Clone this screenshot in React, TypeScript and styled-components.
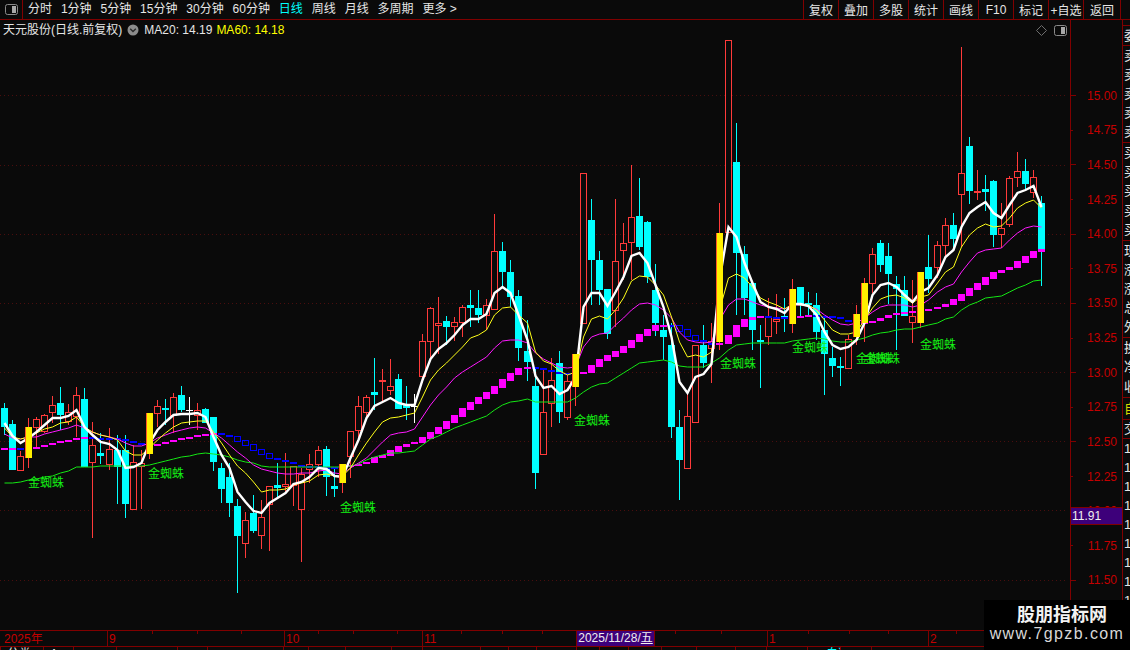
import React from "react";
import styled, { createGlobalStyle } from "styled-components";

const RED_LINE = "#800000";
const BG = "#0a0a0a";
const UI_FONT = `"Liberation Sans", "Noto Sans CJK SC", sans-serif`;

const Global = createGlobalStyle`
  html, body { margin: 0; padding: 0; background: ${BG}; }
  body { font-family: ${UI_FONT}; }
`;

const Screen = styled.div`
  position: relative;
  width: 1130px;
  height: 650px;
  overflow: hidden;
  background: ${BG};
  display: flex;
  flex-direction: column;
  color: #e6e6e6;
  font-size: 12px;
`;

const Toolbar = styled.div`
  height: 19px;
  flex: none;
  display: flex;
  align-items: stretch;
  border-bottom: 1px solid ${RED_LINE};
`;
const ToggleCell = styled.div`
  width: 23px;
  flex: none;
  border-right: 1px solid ${RED_LINE};
  display: flex;
  align-items: center;
  justify-content: center;
  box-sizing: border-box;
`;
const PeriodTabs = styled.div`
  display: flex;
  align-items: center;
  gap: 8.9px;
  padding-left: 5px;
  flex: 1;
`;
const PeriodTab = styled.span<{ $active?: boolean }>`
  color: ${(p) => (p.$active ? "#00ffff" : "#e6e6e6")};
  line-height: 19px;
  white-space: nowrap;
`;
const ActionButtons = styled.div`
  display: flex;
  margin-right: 9px;
  border-right: 1px solid ${RED_LINE};
`;
const ActionButton = styled.div<{ $wide?: boolean }>`
  width: ${(p) => (p.$wide ? 37 : 35)}px;
  box-sizing: border-box;
  border-left: 1px solid ${RED_LINE};
  display: flex;
  align-items: center;
  justify-content: center;
  white-space: nowrap;
  overflow: hidden;
`;

const Main = styled.div`
  height: 610px;
  flex: none;
  display: flex;
`;
const ChartColumn = styled.div`
  width: 1070px;
  flex: none;
  display: flex;
  flex-direction: column;
`;
const InfoRow = styled.div`
  height: 20px;
  flex: none;
  display: flex;
  align-items: center;
  padding: 0 3px;
  line-height: 20px;
`;
const StockName = styled.span`
  color: #e6e6e6;
  margin-right: 5px;
`;
const MaValue = styled.span<{ $color: string; $gap: number }>`
  color: ${(p) => p.$color};
  margin-left: ${(p) => p.$gap}px;
`;
const InfoIcons = styled.div`
  margin-left: auto;
  display: flex;
  align-items: center;
  gap: 7px;
`;
const ChartSvg = styled.svg`
  display: block;
  flex: none;
`;
const SignalLabel = styled.text`
  fill: #14f014;
  font-size: 12px;
  font-family: "Noto Sans CJK SC", sans-serif;
`;

const PriceAxis = styled.div`
  position: relative;
  width: 52px;
  flex: none;
  box-sizing: border-box;
  border-left: 1px solid ${RED_LINE};
  padding-top: 58.4px;
  display: flex;
  flex-direction: column;
`;
const PriceRow = styled.div<{ $major: boolean }>`
  height: 34.64px;
  flex: none;
  display: flex;
  align-items: center;
  &::before {
    content: "";
    width: ${(p) => (p.$major ? 5 : 2)}px;
    height: 1px;
    background: ${RED_LINE};
  }
`;
const PriceLabel = styled.span`
  margin-left: auto;
  margin-right: 5px;
  color: #c40000;
  font-size: 12px;
  line-height: 14px;
`;
const CurrentPrice = styled.div`
  position: absolute;
  left: 0;
  right: 0;
  top: 487px;
  height: 16px;
  box-sizing: content-box;
  background: #3d007a;
  border-top: 1px solid ${RED_LINE};
  border-bottom: 1px solid ${RED_LINE};
  color: #f0f0f0;
  line-height: 16px;
  padding-left: 1px;
`;

const SideStrip = styled.div`
  width: 8px;
  flex: none;
  box-sizing: border-box;
  border-left: 1px solid ${RED_LINE};
  padding-top: 5px;
  overflow: hidden;
  display: flex;
  flex-direction: column;
`;
const StripSection = styled.div<{ $h: number }>`
  height: ${(p) => p.$h}px;
  flex: none;
  border-top: 1px solid ${RED_LINE};
  box-sizing: border-box;
  display: flex;
  flex-direction: column;
  justify-content: space-around;
`;
const StripChar = styled.div<{ $yellow?: boolean }>`
  width: 30px;
  font-size: 13px;
  line-height: 14px;
  padding-left: 1px;
  white-space: nowrap;
  color: ${(p) => (p.$yellow ? "#d8d800" : "#e6e6e6")};
`;

const TimeAxis = styled.div`
  height: 17px;
  flex: none;
  box-sizing: border-box;
  border-top: 1px solid ${RED_LINE};
  border-bottom: 1px solid ${RED_LINE};
  display: flex;
`;
const TimeCell = styled.div<{ $w: number; $kind: "major" | "minor" | "none" }>`
  position: relative;
  width: ${(p) => p.$w}px;
  flex: none;
  box-sizing: border-box;
  border-left: ${(p) => (p.$kind === "major" ? `1px solid ${RED_LINE}` : "none")};
  padding-left: ${(p) => (p.$kind === "major" ? 1 : 4)}px;
  color: #c40000;
  line-height: 16px;
  white-space: nowrap;
  &::before {
    content: "";
    display: ${(p) => (p.$kind === "minor" ? "block" : "none")};
    position: absolute;
    left: 0;
    top: 0;
    width: 1px;
    height: 3px;
    background: ${RED_LINE};
  }
`;
const DateBadge = styled.div`
  width: 79px;
  flex: none;
  box-sizing: border-box;
  background: #3d007a;
  border-left: 1px solid ${RED_LINE};
  border-right: 1px solid ${RED_LINE};
  color: #f0f0f0;
  line-height: 15px;
  text-align: center;
  white-space: nowrap;
  overflow: hidden;
`;
const Underlined = styled.span`
  text-decoration: underline;
`;

const BottomTabs = styled.div`
  height: 3px;
  flex: none;
  display: flex;
  overflow: hidden;
`;
const BottomTab = styled.div<{ $w: number; $cyan?: boolean }>`
  width: ${(p) => p.$w}px;
  flex: none;
  box-sizing: border-box;
  border-left: 1px solid ${RED_LINE};
  padding-left: ${(p) => (p.$cyan ? 18 : 6)}px;
  line-height: 14px;
  white-space: nowrap;
  overflow: hidden;
  color: ${(p) => (p.$cyan ? "#00ffff" : "#e6e6e6")};
`;

const Watermark = styled.div`
  position: absolute;
  left: 984px;
  top: 600px;
  width: 146px;
  height: 50px;
  background: #000;
  display: flex;
  flex-direction: column;
  align-items: center;
  color: #f2f2f2;
`;
const WatermarkTitle = styled.div`
  margin-top: 2px;
  margin-left: 10px;
  font-family: "Noto Sans CJK SC", sans-serif;
  font-weight: 700;
  font-size: 18px;
  line-height: 22px;
`;
const WatermarkUrl = styled.div`
  font-size: 16px;
  line-height: 19px;
  letter-spacing: 1.4px;
  color: #d8d8d8;
`;

const ToggleIcon = () => (
  <svg width="13" height="11" viewBox="0 0 13 11">
    <rect x="0.5" y="0.5" width="12" height="10" rx="2" fill="none" stroke="#8a8a8a" />
    <rect x="7" y="2" width="4" height="7" fill="#a8a8a8" />
  </svg>
);
const DiamondIcon = () => (
  <svg width="11" height="11" viewBox="0 0 11 11">
    <path d="M5.5 0.5 L10.5 5.5 L5.5 10.5 L0.5 5.5 Z" fill="none" stroke="#6e6e6e" />
  </svg>
);
const ChevronBadge = () => (
  <svg width="12" height="12" viewBox="0 0 12 12">
    <circle cx="6" cy="6" r="5.5" fill="#8c8c8c" />
    <path d="M3.2 4.8 L6 7.6 L8.8 4.8" fill="none" stroke="#2a2a2a" strokeWidth="1.4" />
  </svg>
);

// type, bodyTop, bodyBottom, high, low, white, yellow, magenta, green, step
type Row = [string, number, number, number, number, number, number, number, number, number];
const DATA: Row[] = [
  ["c",408,427,403,435,423,428,434,483,448],
  ["c",424,470,420,470,436,437,438,483,448],
  ["r",456,471,451,471,443,439,439,482,448.5],
  ["g",427,458,418,468,438,437,437,480,448],
  ["r",419,428,417,447,432,433,437,479,447],
  ["r",415,432,414,433,425,429,434,477,445],
  ["r",405,413,396,423,418,427,432,476,443],
  ["c",403,415,387,430,418,423,430,473,441],
  ["r",412,422,404,425,416,422,428,471,440],
  ["r",395,417,387,437,410,417,425,467,438],
  ["c",399,467,388,467,427,427,428,467,437],
  ["r",445,463,422,538,435,432,432,467,437.5],
  ["c",453,456,433,464,442,435,435,466,437.5],
  ["r",449,465,428,470,444,437,437,466,438],
  ["c",450,467,435,504,450,440,439,466,439],
  ["c",450,504,435,518,468,451,443,466,441],
  ["r",462,510,445,510,467,455,446,466,443],
  ["r",463,467,450,509,463,455,446,466,445],
  ["g",413,454,413,459,443,448,443,465,445],
  ["r",406,414,400,427,430,440,438,463,444],
  ["c",408,409,399,425,422,433,435,461,442],
  ["r",397,416,393,433,415,427,432,459,440],
  ["c",395,410,386,412,414,423,430,457,438],
  ["w",410,410,397,425,414,422,428,456,437],
  ["r",410,416,403,430,413,421,427,454,435],
  ["c",409,423,408,423,417,421,428,453,434],
  ["c",417,462,417,471,437,432,433,454,433],
  ["c",468,489,463,503,455,443,438,455,435],
  ["c",477,503,463,517,468,455,445,457,437],
  ["c",506,536,499,593,492,466,452,460,441],
  ["r",520,544,512,558,502,473,458,462,445],
  ["c",513,531,495,533,511,482,465,463,450],
  ["r",517,536,500,549,513,492,469,466,454],
  ["r",486,505,486,551,503,490,471,467,458],
  ["c",485,488,463,497,498,490,473,467,460],
  ["r",484,487,453,493,493,489,474,467,462],
  ["r",466,486,466,506,484,485,474,467,465],
  ["r",474,510,468,562,482,483,473,467,465.5],
  ["r",464,470,454,483,477,481,473,467,466],
  ["r",450,465,446,477,468,475,471,467,466.5],
  ["c",449,477,446,496,469,474,470,467,466.5],
  ["c",486,489,467,497,476,476,473,467,467],
  ["g",464,483,464,493,477,476,474,467,466],
  ["r",431,457,431,478,458,468,468,466,465],
  ["r",406,431,396,442,440,455,463,464,464],
  ["r",397,413,395,420,418,443,458,460,462],
  ["c",392,395,358,410,406,432,450,457,458],
  ["r",380,382,369,402,402,422,442,455,455],
  ["r",386,391,359,395,398,418,435,453,451],
  ["c",379,409,374,409,403,417,433,453,447],
  ["c",405,408,386,420,405,415,432,452,444],
  ["w",406,406,394,423,405,413,429,451,442],
  ["r",341,377,334,383,380,397,417,445,438],
  ["r",308,342,307,358,359,380,405,439,433],
  ["r",323,326,297,354,349,370,395,436,428],
  ["c",321,327,316,345,343,363,387,432,422],
  ["r",322,327,317,341,335,355,378,428,416],
  ["r",307,323,305,337,325,347,372,425,409],
  ["c",305,308,290,327,319,338,367,422,403],
  ["c",308,315,290,323,319,335,362,419,398],
  ["r",305,316,299,330,314,330,357,416,393],
  ["r",251,310,214,310,293,315,348,410,387],
  ["c",251,272,242,286,287,308,341,405,380],
  ["c",272,297,260,307,293,307,340,402,374],
  ["c",296,348,290,361,315,315,340,401,369],
  ["c",351,362,320,381,340,323,343,399,367],
  ["c",386,473,367,489,376,352,353,402,368],
  ["r",412,455,370,455,388,361,359,402,370],
  ["r",380,404,358,427,386,364,363,402,372],
  ["c",363,412,351,423,394,371,367,402,373],
  ["r",381,418,373,420,390,375,368,402,374],
  ["g",354,387,354,406,377,372,367,398,374],
  ["r",173,324,173,324,307,337,347,392,372],
  ["c",220,260,199,305,293,319,337,387,366],
  ["c",260,290,251,305,293,316,334,384,360],
  ["c",289,334,289,339,306,319,333,383,356],
  ["r",261,311,199,327,292,310,325,378,352],
  ["r",243,251,223,280,277,298,318,373,347],
  ["r",217,243,165,280,256,281,310,368,341],
  ["c",216,247,178,250,253,276,304,363,335],
  ["c",222,277,221,283,263,277,303,362,330],
  ["c",290,323,264,336,285,285,305,361,326],
  ["c",330,337,315,360,307,295,310,360,325],
  ["c",345,427,323,438,337,317,318,362,325.5],
  ["c",427,460,410,500,382,342,332,366,330],
  ["r",416,469,393,469,393,357,340,367,336],
  ["r",345,423,345,423,377,355,342,367,340],
  ["c",345,363,325,368,374,357,343,367,343],
  ["r",341,349,323,383,364,352,342,363,343.5],
  ["g",233,342,203,350,280,310,320,358,343],
  ["r",40,233,40,233,227,278,305,350,336],
  ["c",162,253,123,315,237,274,299,345,326],
  ["c",254,298,246,315,263,278,299,344,320],
  ["c",283,330,283,350,283,287,302,343,317],
  ["c",340,341,325,388,302,298,305,343,316],
  ["r",316,337,298,345,307,302,307,343,316.5],
  ["r",319,322,294,334,309,305,308,343,316.5],
  ["c",316,318,298,332,313,309,309,343,317],
  ["g",289,324,279,333,304,304,305,341,317],
  ["c",287,304,287,317,304,305,305,340,316],
  ["c",303,305,292,315,306,305,306,339,315],
  ["c",305,332,293,340,315,310,309,338,315.5],
  ["c",330,354,317,395,332,320,315,339,316],
  ["c",358,366,347,377,345,330,320,341,317],
  ["c",366,368,357,386,349,334,324,342,320],
  ["r",339,369,335,369,347,334,325,342,322],
  ["g",314,337,305,345,340,332,323,340,322.5],
  ["g",283,323,278,342,323,320,318,338,322],
  ["r",254,284,248,293,295,308,312,335,321],
  ["c",243,265,240,272,285,299,307,333,318],
  ["c",256,274,243,304,283,296,305,332,315],
  ["c",284,289,276,350,287,295,305,330,313],
  ["c",290,316,276,316,295,298,305,329,312],
  ["r",316,323,280,343,302,303,307,329,311],
  ["g",272,323,272,328,292,297,305,327,310],
  ["c",267,279,235,293,288,295,300,325,309],
  ["r",245,268,241,278,275,283,292,323,307],
  ["r",225,246,218,257,257,272,287,319,304],
  ["c",225,239,213,250,250,267,284,317,300],
  ["r",173,195,47,247,227,247,272,310,295],
  ["c",146,191,137,204,213,235,262,305,289],
  ["r",191,192,170,200,207,228,253,302,284],
  ["c",189,192,175,211,202,224,250,298,278],
  ["c",181,235,180,247,213,227,249,297,273],
  ["r",228,235,203,248,218,226,248,296,270],
  ["r",178,225,176,227,205,218,240,292,267],
  ["r",171,178,152,187,193,208,233,288,262],
  ["c",171,184,159,190,190,203,228,285,257],
  ["r",177,193,170,198,186,200,226,281,252],
  ["c",203,251,196,286,207,208,227,280,249],
];

const cx = (n: number) => Math.floor(4.5 + 8.039 * n);
const series = (col: number) =>
  DATA.map((d, n) => `${cx(n) + 0.5},${d[col]}`).join(" ");

const GRID_Y = [95, 165, 234, 303, 372, 441, 510, 580];
const LABELS: [number, number][] = [
  [28, 487], [148, 478], [340, 512], [574, 425], [720, 368], [792, 352], [856, 363], [864, 363], [920, 349],
];

const Candle = ({ d, n }: { d: Row; n: number }) => {
  const c = cx(n);
  const [t, top, bot, hi, lo] = d;
  if (t === "g") {
    return <line x1={c + 0.5} x2={c + 0.5} y1={hi} y2={lo} stroke="#ff3a3a" />;
  }
  const color = t === "c" ? "#00ffff" : t === "w" ? "#ffffff" : "#ff3a3a";
  const thin = bot - top < 3;
  return (
    <g>
      <line x1={c + 0.5} x2={c + 0.5} y1={hi} y2={lo} stroke={color} />
      {t === "c" || thin ? (
        <rect x={c - 3} y={top} width={7} height={Math.max(bot - top, t === "w" ? 1 : 2)} fill={color} />
      ) : (
        <rect x={c - 2.5} y={top + 0.5} width={6} height={bot - top - 1} fill={BG} stroke={color} />
      )}
    </g>
  );
};

const Step = ({ n, magenta }: { n: number; magenta: boolean }) => {
  const y = DATA[n][9];
  const prev = n > 0 ? DATA[n - 1][9] : y;
  const delta = Math.round(Math.abs(y - prev));
  const grown = delta >= 4;
  const top = Math.round(Math.min(y, prev)) - (grown ? 1 : 0);
  const h = grown ? delta + 2 : Math.max(delta, 2);
  const c = cx(n);
  if (magenta) return <rect x={c - 3} y={top} width={7} height={h} fill="#ff00ff" />;
  if (h < 4) return <rect x={c - 3} y={top} width={7} height={2} fill="#0000ff" />;
  return <rect x={c - 2.5} y={top + 0.5} width={6} height={h - 1} fill="none" stroke="#0000ff" strokeWidth={1.6} />;
};

const Chart = () => {
  let rising = true;
  const steps = DATA.map((d, n) => {
    if (n > 0) {
      if (d[9] < DATA[n - 1][9]) rising = true;
      else if (d[9] > DATA[n - 1][9]) rising = false;
    }
    return rising;
  });
  return (
    <ChartSvg width={1070} height={590} viewBox="0 40 1070 590">
      <g shapeRendering="crispEdges">
        {GRID_Y.map((y) => (
          <line key={y} x1={0} x2={1067} y1={y + 0.5} y2={y + 0.5} stroke="#4a0e0e" strokeDasharray="1 3" />
        ))}
        {DATA.map((d, n) => (
          <Candle key={n} d={d} n={n} />
        ))}
        {DATA.map((_, n) => (
          <Step key={n} n={n} magenta={steps[n]} />
        ))}
      </g>
      <polyline points={series(8)} fill="none" stroke="#14e614" strokeWidth={1} />
      <polyline points={series(7)} fill="none" stroke="#ff19ff" strokeWidth={1} />
      <polyline points={series(6)} fill="none" stroke="#ffff19" strokeWidth={1} />
      <polyline points={series(5)} fill="none" stroke="#ffffff" strokeWidth={2.4} />
      <g shapeRendering="crispEdges">
        {DATA.map((d, n) =>
          d[0] === "g" ? (
            <g key={n}>
              <rect x={cx(n) - 3} y={d[1]} width={7} height={d[2] - d[1]} fill="#fff000" />
              <rect x={cx(n) - 3} y={d[1]} width={1} height={d[2] - d[1]} fill="#ff5a28" />
            </g>
          ) : null
        )}
      </g>
      {LABELS.map(([x, y], i) => (
        <SignalLabel key={i} x={x} y={y}>金蜘蛛</SignalLabel>
      ))}
    </ChartSvg>
  );
};

const PERIODS = ["分时", "1分钟", "5分钟", "15分钟", "30分钟", "60分钟", "日线", "周线", "月线", "多周期", "更多 >"];
const ACTIONS = ["复权", "叠加", "多股", "统计", "画线", "F10", "标记", "+自选", "返回"];
const PRICES = ["15.00","14.75","14.50","14.25","14.00","13.75","13.50","13.25","13.00","12.75","12.50","12.25","12.00","11.75","11.50"];
const STRIP: { h: number; rows: string[]; yellow?: boolean }[] = [
  { h: 20, rows: ["委"] },
  { h: 97, rows: ["卖", "卖", "卖", "卖", "卖"] },
  { h: 98, rows: ["买", "买", "买", "买", "买"] },
  { h: 97, rows: ["现", "涨", "涨", "总", "外"] },
  { h: 60, rows: ["换", "净", "收"] },
  { h: 22, rows: ["自"], yellow: true },
  { h: 19, rows: ["交"] },
  { h: 192, rows: ["1", "1", "1", "1", "1", "1", "1", "1", "1", "1"] },
];
const TIME_CELLS: { w: number; kind: "major" | "minor" | "none"; label?: string }[] = [
  { w: 107, kind: "none", label: "2025年" },
  { w: 45, kind: "major", label: "9" },
  { w: 45, kind: "minor" },
  { w: 44, kind: "minor" },
  { w: 43, kind: "minor" },
  { w: 34, kind: "major", label: "10" },
  { w: 35, kind: "minor" },
  { w: 44, kind: "minor" },
  { w: 25, kind: "minor" },
  { w: 39, kind: "major", label: "11" },
  { w: 41, kind: "minor" },
  { w: 40, kind: "minor" },
  { w: 34, kind: "minor" },
];
const TIME_CELLS_AFTER: typeof TIME_CELLS = [
  { w: 20, kind: "none" },
  { w: 46, kind: "minor" },
  { w: 46, kind: "minor" },
  { w: 41, kind: "major", label: "1" },
  { w: 41, kind: "minor" },
  { w: 39, kind: "minor" },
  { w: 40, kind: "minor" },
  { w: 28, kind: "major", label: "2" },
  { w: 174, kind: "minor" },
];
const TAB_EDGES = [0, 43, 73, 116, 177, 207, 283, 308, 345, 391, 422, 480, 508, 536, 576, 599, 628, 661, 696, 735, 766, 807, 840, 871, 984];

export default function App() {
  return (
    <Screen>
      <Global />
      <Toolbar>
        <ToggleCell><ToggleIcon /></ToggleCell>
        <PeriodTabs>
          {PERIODS.map((p) => (
            <PeriodTab key={p} $active={p === "日线"}>{p}</PeriodTab>
          ))}
        </PeriodTabs>
        <ActionButtons>
          {ACTIONS.map((a, i) => (
            <ActionButton key={a} $wide={i === ACTIONS.length - 1}>{a}</ActionButton>
          ))}
        </ActionButtons>
      </Toolbar>
      <Main>
        <ChartColumn>
          <InfoRow>
            <StockName>天元股份(日线.前复权)</StockName>
            <ChevronBadge />
            <MaValue $color="#e6e6e6" $gap={5}>MA20: 14.19</MaValue>
            <MaValue $color="#ffff00" $gap={4}>MA60: 14.18</MaValue>
            <InfoIcons>
              <DiamondIcon />
              <ToggleIcon />
            </InfoIcons>
          </InfoRow>
          <Chart />
        </ChartColumn>
        <PriceAxis>
          {PRICES.map((p, i) => (
            <PriceRow key={p} $major={i % 2 === 0}>
              <PriceLabel>{p}</PriceLabel>
            </PriceRow>
          ))}
          <CurrentPrice>11.91</CurrentPrice>
        </PriceAxis>
        <SideStrip>
          {STRIP.map((s, i) => (
            <StripSection key={i} $h={s.h}>
              {s.rows.map((r, j) => (
                <StripChar key={j} $yellow={s.yellow}>{r}</StripChar>
              ))}
            </StripSection>
          ))}
        </SideStrip>
      </Main>
      <TimeAxis>
        {TIME_CELLS.map((c, i) => (
          <TimeCell key={i} $w={c.w} $kind={c.kind}>{c.label}</TimeCell>
        ))}
        <DateBadge>2025/11/28/<Underlined>五</Underlined></DateBadge>
        {TIME_CELLS_AFTER.map((c, i) => (
          <TimeCell key={i} $w={c.w} $kind={c.kind}>{c.label}</TimeCell>
        ))}
      </TimeAxis>
      <BottomTabs>
        {TAB_EDGES.slice(0, -1).map((x, i) => (
          <BottomTab key={x} $w={TAB_EDGES[i + 1] - x} $cyan={i === 21}>
            {i === 0 ? "分类" : i === 1 ? "A" : i === 21 ? "自选" : ""}
          </BottomTab>
        ))}
      </BottomTabs>
      <Watermark>
        <WatermarkTitle>股朋指标网</WatermarkTitle>
        <WatermarkUrl>www.7gpzb.com</WatermarkUrl>
      </Watermark>
    </Screen>
  );
}
